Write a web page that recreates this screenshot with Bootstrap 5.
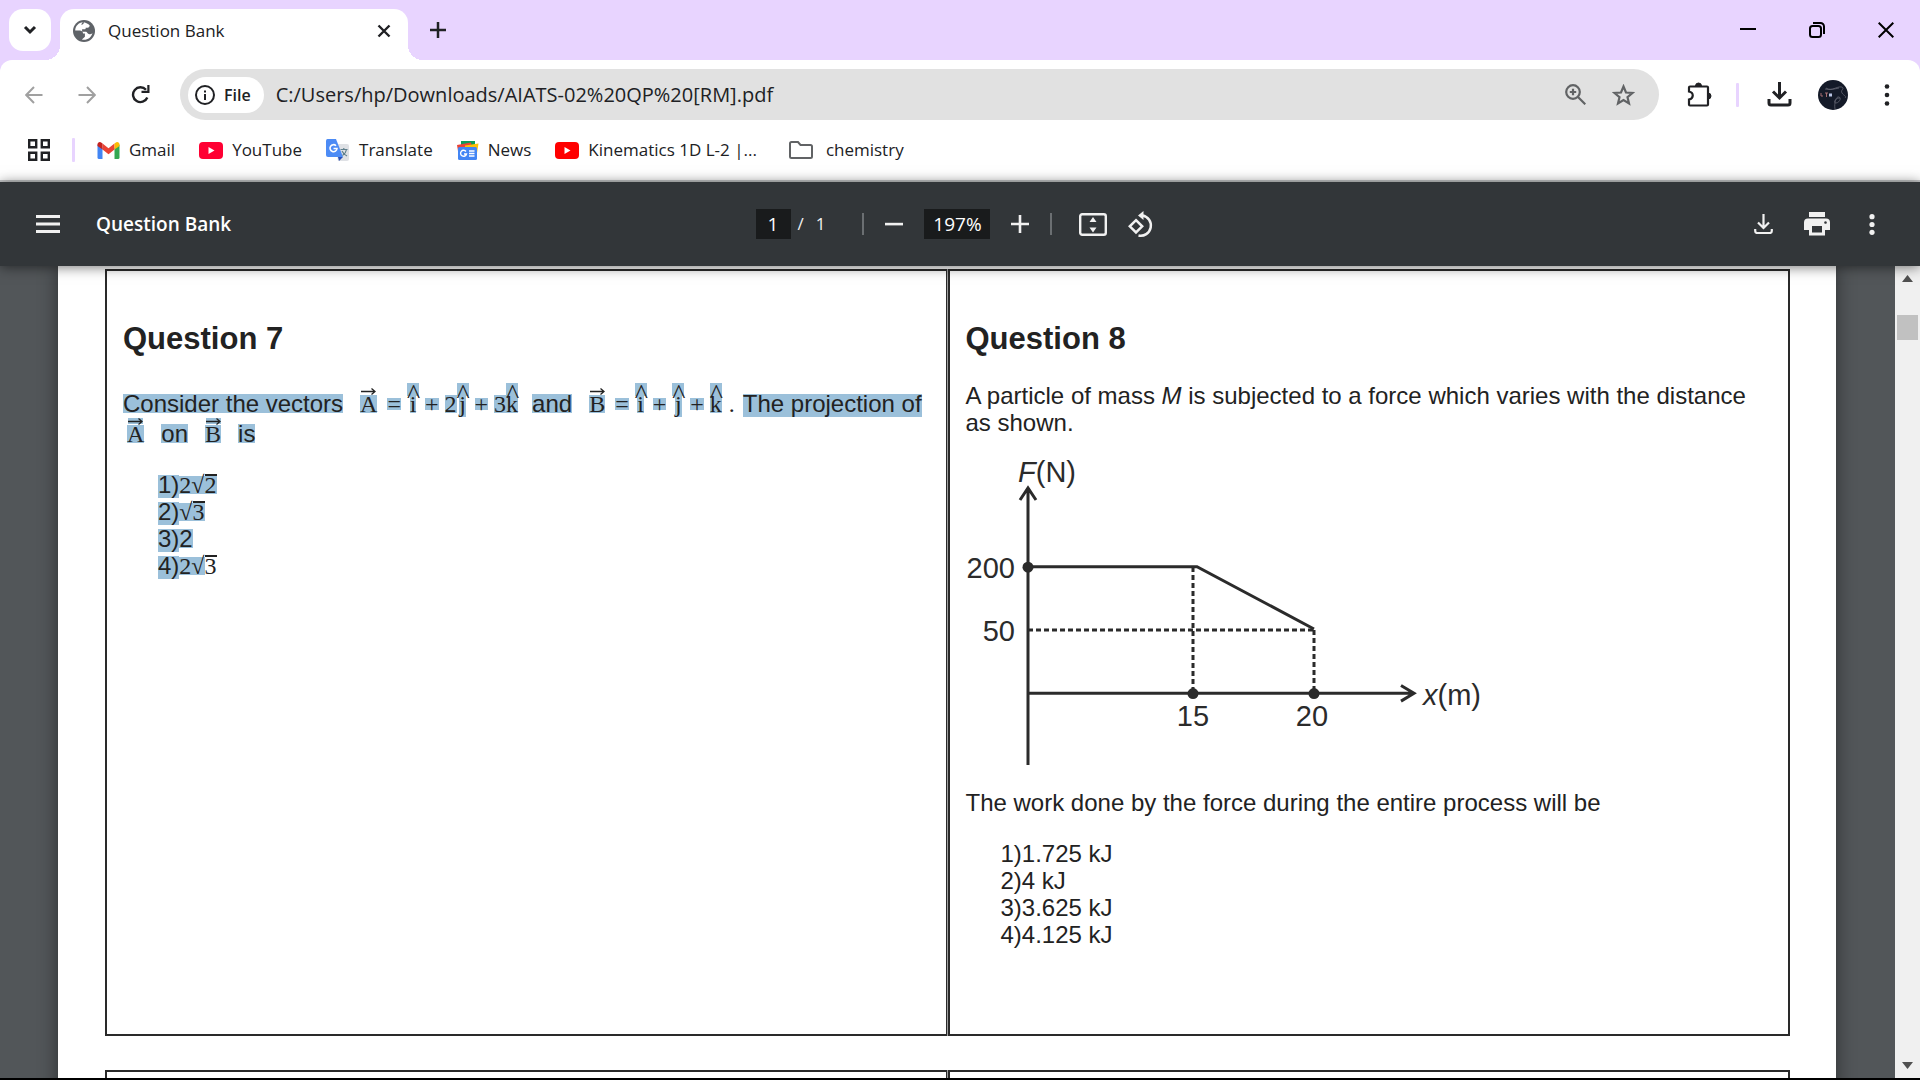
<!DOCTYPE html>
<html lang="en">
<head>
<meta charset="utf-8">
<meta name="viewport" content="width=device-width, initial-scale=1">
<title>Question Bank</title>
<link href="https://cdn.jsdelivr.net/npm/bootstrap@5.3.0/dist/css/bootstrap.min.css" rel="stylesheet">
<style>
  :root { --strip: #e8d4ff; --ink: #202124; --sel: #9bc0da; }
  body { font-family: "Open Sans", "Noto Sans", sans-serif; font-size: 17px; line-height: 24px; color: var(--ink); background: #000; }
  svg { display: block; flex: none; }
  button { border: 0; background: none; padding: 0; color: inherit; }
  .window-frame { height: 100vh; padding-bottom: 2px; }

  /* tab strip */
  .tab-strip { background: var(--strip); height: 60px; padding: 9px 0 0 9px; }
  .tab-search { width: 42px; height: 42px; border-radius: 14px; background: #fff; margin-right: 9px; }
  .tab-active { position: relative; width: 348px; height: 51px; padding: 0 16px 8px 13px; gap: 13px; background: #fff; border-radius: 14px 14px 0 0; }
  .tab-active::before, .tab-active::after { content: ""; position: absolute; bottom: 0; width: 15px; height: 15px; }
  .tab-active::before { right: 100%; background: radial-gradient(circle at 0 0, transparent 15px, #fff 15px); }
  .tab-active::after { left: 100%; background: radial-gradient(circle at 100% 0, transparent 15px, #fff 15px); }
  .tab-new { height: 42px; margin-left: 22px; }
  .win-controls { gap: 53px; padding-right: 26px; height: 42px; }

  /* address bar */
  .chrome-top { background: var(--strip); }
  .address-row { background: #fff; border-radius: 12px 12px 0 0; height: 68px; padding: 1px 26px 0 25px; }
  .nav-icons { gap: 35px; width: 155px; color: #a0a0a0; }
  .nav-icons .reload { color: var(--ink); }
  .omnibox { background: #e1e1e1; height: 51px; border-radius: 26px; padding: 0 24px 0 8px; }
  .file-chip { background: #fff; height: 36px; border-radius: 18px; padding: 0 13px 0 7px; gap: 9px; font-weight: 600; font-size: 16px; }
  .url-field { border: 0; background: none; outline: 0; font-size: 20px; color: var(--ink); padding: 0 0 0 12px; min-width: 0; }
  .omni-icons { gap: 26px; color: #616365; }
  .ext-icons { padding-left: 28px; }
  .divider-lilac { width: 3px; height: 24px; background: var(--strip); border-radius: 1px; }

  /* bookmarks */
  .bookmark-row { background: #fff; height: 54px; padding: 0 28px 8px; border-bottom: 2px solid #c8cacb; box-sizing: border-box; }
  .bookmark-row a { color: var(--ink); text-decoration: none; gap: 9px; margin-right: 24px; }
  .bookmark-row .apps { margin-right: 22px; }
  .bookmark-row .divider-lilac { margin-right: 22px; }

  /* viewer toolbar */
  .viewer-bar { position: relative; z-index: 2; background: #323639; color: #f1f1f1; height: 84px; padding: 0 45px 0 36px; box-shadow: 0 1px 12px rgba(0,0,0,.55); }
  .bar-side { flex: 1 1 0; }
  .bar-title-group { gap: 36px; }
  .bar-actions { gap: 31px; }
  .bar-tools { gap: 21px; }
  .doc-title { font-size: 19px; font-weight: 600; color: #fff; }
  .viewer-bar input { background: #191b1c; color: #fff; border: 0; height: 30px; text-align: center; font-size: 19px; padding: 0; }
  .page-no { width: 35px; }
  .page-sep { margin: 0 12px 0 7px; }
  .zoom-no { width: 66px; }
  .bar-rule { width: 2px; height: 22px; background: #6b6f72; }
  .rule-pages { margin-left: 16px; }
  .rule-zoom { margin-right: 6px; }

  /* document */
  .doc-scroll { background: #525659; overflow: hidden; min-height: 0; padding: 0 59px 0 58px; }
  .sheet { background: #fff; padding: 3px 46px 0 47px; box-shadow: 0 0 18px rgba(0,0,0,.45); min-height: 100%; font-family: "Liberation Sans", Arial, sans-serif; font-size: 24px; line-height: 27px; color: #222; }
  .q-row { margin-bottom: 34px; gap: 1px; background: #a0a0a0; }
  .q-cell { background: #fff; border: 2px solid #2a2a2a; padding: 50px 16px 86px; flex: 1 1 0; min-width: 0; }
  .q-cell:first-child { border-right-width: 1px; }
  .q-head { font-size: 31px; line-height: 36px; font-weight: 700; margin: 0 0 25px; }
  .q-text, .q-fig { margin: 0 0 24px; }
  .q-fig { overflow: visible; }
  .q-opts { list-style: none; margin: 0; padding: 0 0 0 35px; }
  .math-par { line-height: 30px; margin: 32px 0 22px; }

  /* selected text runs */
  .sel { display: inline-block; line-height: 19px; background: var(--sel); }
  .sel-tall { padding-bottom: 4px; }
  .mt { display: inline-block; position: relative; font-family: "Liberation Serif", "Times New Roman", serif; line-height: 18px; background: var(--sel); text-align: center; }
  .mt-op { background: linear-gradient(var(--sel), var(--sel)) 0 3px / 100% 12px no-repeat; margin: 0 6px; }
  .mt-hat { background: none; width: 12px; }
  .mt-hat > b { font-weight: 400; display: inline-block; background: var(--sel); }
  .mt-j > b { padding-bottom: 4px; }
  .hat-mark { position: absolute; left: 0; top: -12px; width: 12px; height: 13px; line-height: 22px; font-size: 28px; background: var(--sel); }
  .arr-mark { position: absolute; left: 1px; top: -7px; }
  .arr-sel::before { content: ""; position: absolute; left: 1px; top: -7px; width: 15px; height: 6px; background: var(--sel); }
  .gap-math { margin-left: 17px; }
  .gap-eq { margin-right: 4px; }
  .gap-word { margin-left: 14px; }
  .gap-dot { margin: 0 8px 0 7px; }
  .root-arg { border-top: 2px solid #222; line-height: 18px; }
  .plain { background: none; }

  /* scrollbar */
  .scroll-track { width: 25px; background: #f0f0f0; padding: 9px 2px; color: #505050; }
  .scroll-thumb { width: 21px; height: 25px; background: #c1c1c1; margin-top: 33px; }
</style>
<script src="https://cdn.jsdelivr.net/npm/bootstrap@5.3.0/dist/js/bootstrap.bundle.min.js"></script>
</head>
<body>
<div class="window-frame d-flex flex-column">

  <header class="chrome-top flex-shrink-0">
    <div class="tab-strip d-flex">
      <button class="tab-search d-flex align-items-center justify-content-center" aria-label="Search tabs">
        <svg width="14" height="10" viewBox="0 0 14 10" fill="none" stroke="#202124" stroke-width="3"><path d="M2 2l5 5 5-5"/></svg>
      </button>
      <div class="tab-active d-flex align-items-center">
        <svg width="22" height="22" viewBox="0 0 22 22"><circle cx="11" cy="11" r="11" fill="#5f6368"/><path d="M10 2.2C5.600 2.500 2.200 6.200 2.200 10.500h4.600c2 0 3.300 1.400 3.300 3.100h1.800v3.200l-3 2.700c4.800 1.200 9.500-1.800 10.500-6.500-.7 1-1.800 1.400-3 1.200-2-.3-2.200-2-3.200-2.400H9.100V9.300h2.400c1 0 1.200-.6 1.200-1.600h1.900c1.300 0 2-1 2.100-2.200-1.500-1.500-3.600-2.900-6-3.200C11.500 3.500 9.800 4.500 8.500 5 8.300 3.800 9 3 10 2.200z" fill="#fff"/></svg>
        <span class="flex-grow-1">Question Bank</span>
        <button aria-label="Close tab"><svg width="16" height="14" viewBox="0 0 16 14" stroke="#202124" stroke-width="2.400"><path d="M2.500 1.500l11 11M13.500 1.500l-11 11"/></svg></button>
      </div>
      <button class="tab-new" aria-label="New tab"><svg width="16" height="16" viewBox="0 0 16 16" stroke="#202124" stroke-width="2.500"><path d="M8 0v16M0 8h16"/></svg></button>
      <div class="win-controls ms-auto d-flex align-items-center">
        <button aria-label="Minimize"><svg width="16" height="16" viewBox="0 0 16 16" stroke="#000" stroke-width="2"><path d="M0 7h16"/></svg></button>
        <button aria-label="Restore"><svg width="16" height="16" viewBox="0 0 16 16" fill="none" stroke="#000" stroke-width="2"><rect x="1" y="4" width="11" height="11" rx="2.500"/><path d="M4 1h7.500A3.500 3.500 0 0 1 15 4.500V12"/></svg></button>
        <button aria-label="Close"><svg width="16" height="16" viewBox="0 0 16 16" stroke="#000" stroke-width="2"><path d="M.7.7l14.600 14.600M15.300.7L.7 15.300"/></svg></button>
      </div>
    </div>

    <div class="address-row d-flex align-items-center">
      <div class="nav-icons d-flex align-items-center">
        <button aria-label="Back"><svg width="18" height="18" viewBox="0 0 18 18" fill="none" stroke="currentColor" stroke-width="2"><path d="M17.500 9H1.500M9 1L1.200 9 9 17"/></svg></button>
        <button aria-label="Forward"><svg width="18" height="18" viewBox="0 0 18 18" fill="none" stroke="currentColor" stroke-width="2"><path d="M.5 9h16M9 1l7.800 8L9 17"/></svg></button>
        <button class="reload" aria-label="Reload"><svg width="19" height="19" viewBox="0 0 19 19"><path d="M16.300 12.500A7.400 7.400 0 1 1 15 4.800" fill="none" stroke="currentColor" stroke-width="2.400"/><path d="M18.500 0v8h-8V5.700h5.800V0z" fill="currentColor"/></svg></button>
      </div>
      <div class="omnibox flex-grow-1 d-flex align-items-center">
        <button class="file-chip d-flex align-items-center">
          <svg width="20" height="20" viewBox="0 0 20 20"><circle cx="10" cy="10" r="9" fill="none" stroke="#202124" stroke-width="2"/><path d="M9 9h2v6H9zM9 5.500h2v2H9z" fill="#202124"/></svg>
          <span>File</span>
        </button>
        <input class="url-field flex-grow-1" type="text" aria-label="Address" value="C:/Users/hp/Downloads/AIATS-02%20QP%20[RM].pdf">
        <div class="omni-icons d-flex align-items-center">
          <button aria-label="Zoom"><svg width="21" height="21" viewBox="0 0 21 21" fill="none" stroke="currentColor" stroke-width="2.200"><circle cx="8" cy="8" r="6.800"/><path d="M13 13l7.300 7.300M8 4.800v6.400M4.800 8h6.400"/></svg></button>
          <button aria-label="Bookmark"><svg width="23" height="22" viewBox="0 0 23 22" fill="none" stroke="currentColor" stroke-width="2.200"><path d="M11.500 2.500l2.500 6 6.400.5-4.900 4.200 1.500 6.300-5.500-3.400L6 19.500l1.500-6.300L2.600 9 9 8.500z"/></svg></button>
        </div>
      </div>
      <div class="ext-icons d-flex align-items-center">
        <button class="me-4" aria-label="Extensions"><svg width="25" height="25" viewBox="0 0 25 25"><path d="M4 4.500h16q1 0 1 1v17q0 1-1 1H3q-1 0-1-1v-5c5-1 5-7 0-8v-4q0-1 1-1z" fill="none" stroke="#202124" stroke-width="2.200"/><path d="M8.500 4a3 3 0 0 1 6 0zM21 11a3 3 0 0 1 0 6z" fill="#202124" stroke="#202124"/></svg></button>
        <span class="divider-lilac"></span>
        <button class="ms-4 ps-1 me-4" aria-label="Downloads"><svg width="25" height="25" viewBox="0 0 25 25" fill="none" stroke="#202124" stroke-width="3"><path d="M12.500 0v16M6 9.500l6.500 6.500L19 9.500M2 17v4q0 2 2 2h17q2 0 2-2v-4"/></svg></button>
        <button class="me-4" aria-label="Profile"><svg width="32" height="30" viewBox="0 0 32 30"><circle cx="17" cy="15" r="15" fill="#141a28"/><g fill="none" stroke="#6d6f7b" stroke-width=".7"><path d="M10 8c6 4 10-2 16-1 3 2-2 3 0 6s5 3 3 5"/><path d="M9 9c5 1 10 0 14-1"/><path d="M24 18c-5 0-7 5-4 5s6-5 3-6-5 6-4 12"/></g><path d="M5 13v3h2M9 13h3M10.500 13v4" stroke="#a56d71" fill="none"/><path d="M13 15h3" stroke="#b9c5e4" stroke-width="3"/></svg></button>
        <button class="ms-2" aria-label="Menu"><svg width="14" height="22" viewBox="0 0 14 22" fill="#202124"><circle cx="7" cy="2.500" r="2.300"/><circle cx="7" cy="11" r="2.300"/><circle cx="7" cy="19.500" r="2.300"/></svg></button>
      </div>
    </div>

    <nav class="bookmark-row d-flex align-items-center" aria-label="Bookmarks">
      <button class="apps" aria-label="All apps"><svg width="22" height="22" viewBox="0 0 22 22" fill="none" stroke="#202124" stroke-width="2.400"><path d="M1.200 1.200h7v7h-7zM13.800 1.200h7v7h-7zM1.200 13.800h7v7h-7zM13.800 13.800h7v7h-7z"/></svg></button>
      <span class="divider-lilac"></span>
      <a href="#" class="d-flex align-items-center"><svg width="23" height="17" viewBox="0 0 22 17"><path d="M0 2.500v13Q0 17 1.500 17H5V6z" fill="#4285f4"/><path d="M22 2.500v13q0 1.500-1.500 1.500H17V6z" fill="#34a853"/><path d="M5 1.500l6 4.700 6-4.700V7.600l-6 4.600-6-4.600z" fill="#ea4335"/><path d="M0 2.500C0 .3 2.300-.6 4 .7l1 .8v6.100L0 3.900z" fill="#c5221f"/><path d="M22 2.500C22 .3 19.700-.6 18 .7l-1 .8v6.100l5-3.700z" fill="#fbbc04"/></svg><span>Gmail</span></a>
      <a href="#" class="d-flex align-items-center"><svg width="24" height="17" viewBox="0 0 24 17"><rect width="24" height="17" rx="4" fill="#ff0033"/><path d="M9.500 5l6 3.500-6 3.500z" fill="#fff"/></svg><span>YouTube</span></a>
      <a href="#" class="d-flex align-items-center"><svg width="24" height="23" viewBox="0 0 24 23"><path d="M9 5h12q2 0 2 2v13q0 2-2 2h-9z" fill="#dfe1e5"/><path d="M12 18h5l-4 4z" fill="#2a51b8"/><path d="M1.500 0H10l7 18H2q-2 0-2-2V2Q0 0 1.500 0z" fill="#4c8bf5"/><path d="M10 6.700A3.500 3.500 0 1 0 11 9.500H7.500" fill="none" stroke="#fff" stroke-width="1.600"/><path d="M14.500 10.500h7M17.800 9v1.500M20.500 10.500c-.5 3-2.500 5-4 6M16 12c1 2 3 4 5 5" fill="none" stroke="#5f7f8c" stroke-width="1.200"/></svg><span>Translate</span></a>
      <a href="#" class="d-flex align-items-center"><svg width="22" height="19" viewBox="0 0 22 19"><path d="M4 0h14v6H4z" fill="#0c9d58"/><path d="M0 4l14-2.500L15 8 1 10z" fill="#ea4335"/><path d="M8 4.500L21.500 2.500 20 12 8 9z" fill="#ffc107"/><rect x="1" y="6" width="19" height="13" rx="1.500" fill="#4285f4"/><path d="M9 10.500A3 3 0 1 0 9.500 13H7M12 10h5.500M12 12.500h5.500M12 15h5.500" fill="none" stroke="#fff" stroke-width="1.400"/></svg><span>News</span></a>
      <a href="#" class="d-flex align-items-center"><svg width="24" height="17" viewBox="0 0 24 17"><rect width="24" height="17" rx="4" fill="#f00"/><path d="M9.500 5l6 3.500-6 3.500z" fill="#fff"/></svg><span>Kinematics 1D L-2 |...</span></a>
      <a href="#" class="d-flex align-items-center ms-2"><svg width="24" height="18" viewBox="0 0 24 18" fill="none" stroke="#616365" stroke-width="2"><path d="M2.500 1H9l2.500 3h10Q23 4 23 5.500v10q0 1.500-1.500 1.500h-19Q1 17 1 15.500v-13Q1 1 2.500 1z"/></svg><span class="ms-1">chemistry</span></a>
    </nav>
  </header>

  <div class="viewer-bar d-flex align-items-center flex-shrink-0">
    <div class="bar-side bar-title-group d-flex align-items-center">
      <button aria-label="Toggle sidebar"><svg width="24" height="18" viewBox="0 0 24 18" fill="#f1f1f1"><path d="M0 0h24v3H0zM0 7.500h24v3H0zM0 15h24v3H0z"/></svg></button>
      <span class="doc-title">Question Bank</span>
    </div>
    <div class="bar-tools d-flex align-items-center">
      <div class="d-flex align-items-center">
        <input class="page-no" type="text" value="1" aria-label="Page number">
        <span class="page-sep">/</span><span>1</span>
      </div>
      <span class="bar-rule rule-pages"></span>
      <button aria-label="Zoom out"><svg width="18" height="18" viewBox="0 0 18 18" fill="#f1f1f1"><path d="M0 7.800h18v2.600H0z"/></svg></button>
      <input class="zoom-no" type="text" value="197%" aria-label="Zoom level">
      <button aria-label="Zoom in"><svg width="18" height="18" viewBox="0 0 18 18" fill="#f1f1f1"><path d="M7.700 0h2.600v7.700H18v2.600h-7.700V18H7.700v-7.700H0V7.700h7.700z"/></svg></button>
      <span class="bar-rule rule-zoom"></span>
      <button aria-label="Fit to page"><svg width="28" height="23" viewBox="0 0 28 23"><rect x="1.200" y="1.200" width="25.600" height="20.600" rx="2" fill="none" stroke="#f1f1f1" stroke-width="2.400"/><path d="M14 4l3.500 5h-7zM14 19.500l3.500-5h-7z" fill="#f1f1f1"/></svg></button>
      <button aria-label="Rotate"><svg width="27" height="27" viewBox="0 0 27 27" fill="none" stroke="#f1f1f1" stroke-width="2.500"><path d="M8 9.200l6.200 6.100L8 21.500l-6.200-6.200z"/><path d="M14.500 4.500a10.200 10.200 0 1 1-4 20"/><path d="M15.500 0v9L10 4.500z" fill="#f1f1f1" stroke="none"/></svg></button>
    </div>
    <div class="bar-side bar-actions d-flex align-items-center justify-content-end">
      <button aria-label="Download"><svg width="19" height="20" viewBox="0 0 19 20" fill="none" stroke="#f1f1f1" stroke-width="2.200"><path d="M9.500 0v14M4 8.500l5.500 5.500L15 8.500M1.200 15v2q0 2 2 2h12.600q2 0 2-2v-2"/></svg></button>
      <button aria-label="Print"><svg width="26" height="24" viewBox="0 0 26 24" fill="#f1f1f1"><path d="M5 0h16v5H5z"/><path fill-rule="evenodd" d="M4 6.500h18q4 0 4 4V18h-5v5.500H5V18H0v-7.500q0-4 4-4zM8 14v6.500h10V14zm13.500-4.800a1.300 1.300 0 1 0 .01 0z"/></svg></button>
      <button aria-label="More"><svg width="14" height="21" viewBox="0 0 14 21" fill="#f1f1f1"><circle cx="11" cy="2.700" r="2.600"/><circle cx="11" cy="10.500" r="2.600"/><circle cx="11" cy="18.300" r="2.600"/></svg></button>
    </div>
  </div>

  <div class="d-flex flex-grow-1 overflow-hidden">
    <main class="doc-scroll flex-grow-1">
      <div class="sheet">
        <div class="q-row d-flex">
          <section class="q-cell">
            <h2 class="q-head">Question 7</h2>
            <p class="math-par"><span class="sel">Consider the vectors</span><span class="mt gap-math gap-eq">A<svg class="arr-mark" width="15" height="7" viewBox="0 0 15 7" fill="none" stroke="#222"><path d="M0 3.500h14M10.500.5l3.500 3-3.500 3" stroke-width="1.300"/></svg></span><span class="mt mt-op">=</span><span class="mt mt-hat"><b>i</b><span class="hat-mark">^</span></span><span class="mt mt-op">+</span><span class="mt">2</span><span class="mt mt-hat mt-j"><b>j</b><span class="hat-mark">^</span></span><span class="mt mt-op">+</span><span class="mt">3</span><span class="mt mt-hat"><b>k</b><span class="hat-mark">^</span></span><span class="sel gap-word">and</span><span class="mt gap-math gap-eq">B<svg class="arr-mark" width="15" height="7" viewBox="0 0 15 7" fill="none" stroke="#222"><path d="M0 3.500h14M10.500.5l3.500 3-3.500 3" stroke-width="1.300"/></svg></span><span class="mt mt-op">=</span><span class="mt mt-hat"><b>i</b><span class="hat-mark">^</span></span><span class="mt mt-op">+</span><span class="mt mt-hat mt-j"><b>j</b><span class="hat-mark">^</span></span><span class="mt mt-op">+</span><span class="mt mt-hat"><b>k</b><span class="hat-mark">^</span></span><span class="mt plain gap-dot">.</span><span class="sel sel-tall">The projection of</span><br><span class="mt arr-sel ms-1">A<svg class="arr-mark" width="15" height="7" viewBox="0 0 15 7" fill="none" stroke="#222"><path d="M0 3.500h14M10.500.5l3.500 3-3.500 3" stroke-width="1.300"/></svg></span><span class="sel gap-math">on</span><span class="mt arr-sel gap-math">B<svg class="arr-mark" width="15" height="7" viewBox="0 0 15 7" fill="none" stroke="#222"><path d="M0 3.500h14M10.500.5l3.500 3-3.500 3" stroke-width="1.300"/></svg></span><span class="sel gap-math">is</span></p>
            <ol class="q-opts">
              <li><span class="sel sel-tall">1)</span><span class="mt">2</span><span class="mt">√</span><span class="mt root-arg">2</span></li>
              <li><span class="sel sel-tall">2)</span><span class="mt">√</span><span class="mt root-arg">3</span></li>
              <li><span class="sel sel-tall">3)</span><span class="sel">2</span></li>
              <li><span class="sel sel-tall">4)</span><span class="mt">2</span><span class="mt">√</span><span class="mt root-arg plain">3</span></li>
            </ol>
          </section>
          <section class="q-cell">
            <h2 class="q-head">Question 8</h2>
            <p class="q-text">A particle of mass <i>M</i> is subjected to a force which varies with the distance as shown.</p>
            <svg class="q-fig" width="517" height="305" viewBox="0 0 517 305" role="img" aria-label="Force against distance" font-family="Liberation Sans, Arial, sans-serif" font-size="29" fill="#2b2b2b">
              <g fill="none" stroke="#2b2b2b" stroke-width="3">
                <path d="M62 305V28M54 40l8-12 8 12M62 233.300h385M435 225.500l13 7.800-13 7.800M62 106.700h169L348 169"/>
                <path d="M62 170h286M227 107v126M348 170v63" stroke-dasharray="5 3"/>
              </g>
              <circle cx="62" cy="107.200" r="5.500"/><circle cx="227" cy="233.600" r="5.500"/><circle cx="348" cy="233.600" r="5.500"/>
              <text x="52" y="22"><tspan font-style="italic">F</tspan>(N)</text>
              <text x="49" y="118" text-anchor="end">200</text>
              <text x="49" y="181" text-anchor="end">50</text>
              <text x="227" y="266" text-anchor="middle">15</text>
              <text x="346" y="266" text-anchor="middle">20</text>
              <text x="457" y="245"><tspan font-style="italic">x</tspan>(m)</text>
            </svg>
            <p class="q-text">The work done by the force during the entire process will be</p>
            <ol class="q-opts">
              <li>1)1.725 kJ</li>
              <li>2)4 kJ</li>
              <li>3)3.625 kJ</li>
              <li>4)4.125 kJ</li>
            </ol>
          </section>
        </div>
        <div class="q-row d-flex">
          <section class="q-cell"></section>
          <section class="q-cell"></section>
        </div>
      </div>
    </main>
    <div class="scroll-track d-flex flex-column align-items-center flex-shrink-0">
      <svg width="11" height="7" viewBox="0 0 11 7" fill="currentColor"><path d="M5.500 0L11 7H0z"/></svg>
      <div class="scroll-thumb"></div>
      <svg class="mt-auto" width="11" height="7" viewBox="0 0 11 7" fill="currentColor"><path d="M0 0h11L5.500 7z"/></svg>
    </div>
  </div>
</div>
</body>
</html>
